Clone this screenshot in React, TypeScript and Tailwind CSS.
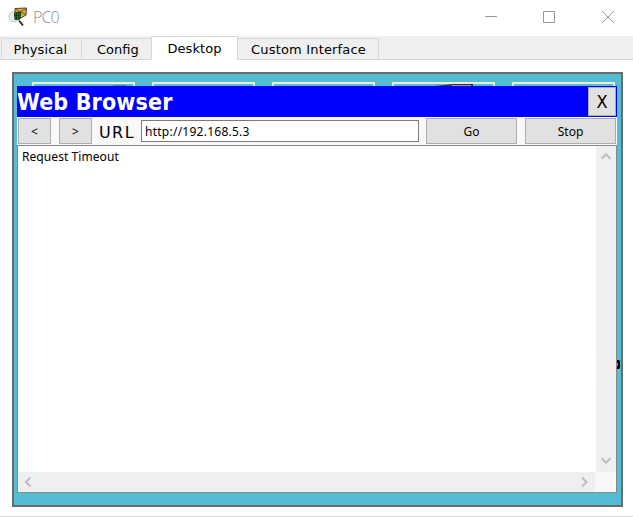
import React from "react";

function Tab({ label, className }: { label: string; className: string }) {
  return (
    <div className={`box-border shrink-0 border border-[#d9d9d9] whitespace-nowrap font-['DejaVu_Sans',sans-serif] text-[13px] leading-[20px] ${className}`}>
      {label}
    </div>
  );
}

function PushButton({ label, className }: { label: string; className: string }) {
  return (
    <button className={`shrink-0 border border-[#adadad] bg-[#e1e1e1] text-center ${className}`}>{label}</button>
  );
}

function Chevron({ d }: { d: string }) {
  return (
    <svg width="12" height="12" viewBox="0 0 12 12" fill="none" stroke="#bfbfbf" strokeWidth="2.1">
      <path d={d} />
    </svg>
  );
}

function AppIcon() {
  return (
    <svg width="20" height="20" viewBox="0 0 20 20">
      <circle cx="6" cy="9.5" r="5.2" fill="#e6eae8" stroke="#c5cbc9" />
      <path d="M7 1.5 18.5 1 18 8 13 11 7 10Z" fill="#dba83f" stroke="#5a4318" />
      <path d="M7.5 2 12 5 18.5 1.5M13 5 18 8" fill="none" stroke="#604615" strokeWidth=".8" />
      <path d="M6.5 6 12.5 5 12 12 7 12.5Z" fill="#0b8a26" stroke="#153419" />
      <path d="M6.5 8.5h6M8.5 5.5v7M10.5 5.5v7" stroke="#063b0c" strokeWidth=".8" />
      <path d="m11 13.5 4 5" stroke="#252525" strokeWidth="1.8" />
    </svg>
  );
}

function TitleBar() {
  return (
    <header className="flex h-[36px] items-start bg-white">
      <div className="ml-[8px] mt-[7px]"><AppIcon /></div>
      <span className="ml-[5px] mt-[7px] flex-1 font-['Open_Sans',sans-serif] text-[16px] leading-[20px] font-light tracking-[-0.9px] text-[#8c8c8c]">PC0</span>
      <svg className="mt-[8px] shrink-0" width="148" height="18" viewBox="485 8 148 18" fill="none" stroke="#999">
        <path d="M485 16.5h12" />
        <path d="M543.5 11.5h11v11h-11z" />
        <path d="m602 11 12 12m0-12-12 12" />
      </svg>
    </header>
  );
}

function Cards() {
  return (
    <div className="flex h-[12px] gap-[17px] pl-[18px] pt-[8px]">
      {[0, 1, 2, 3, 4].map((i) => (
        <div key={i} className="h-[4px] w-[103px] shrink-0 border-2 border-b-0 border-[#efebda]">
          {i === 0 && <div className="ml-[79px] mt-px h-px w-[13px] bg-[#398ba0]" />}
          {i === 3 && (
            <svg className="block" width="99" height="2" viewBox="0 0 99 2">
              <path d="M40 2 60 0h19v2Z" fill="#303638" />
              <path d="M58 1.5h19" stroke="#a09a98" />
            </svg>
          )}
        </div>
      ))}
    </div>
  );
}

export default function App() {
  return (
    <main className="flex h-[517px] w-[633px] flex-col overflow-hidden border-b border-[#d9d9d9] bg-white text-black">
      <TitleBar />
      <nav className="flex h-[24px] items-end border-b border-[#d9d9d9] bg-[#efefef] pl-px">
        <Tab label="Physical" className="-mb-px h-[22px] w-[81px] bg-[#efefef] pl-[11.5px] pt-px tracking-[0.1px]" />
        <Tab label="Config" className="-mb-px -ml-px h-[22px] w-[71px] bg-[#efefef] pl-[15px] pt-px" />
        <Tab label="Desktop" className="-mb-px -ml-px h-[24px] w-[87px] border-b-white bg-white pl-[15.5px] pt-[2px] tracking-[0.05px]" />
        <Tab label="Custom Interface" className="-mb-px -ml-px h-[22px] w-[142px] bg-[#efefef] pl-[13px] pt-px tracking-[0.18px]" />
      </nav>
      <section className="relative ml-[12px] mt-[12px] h-[435px] w-[611px] shrink-0 border-2 border-[#6b6b6b] bg-[#54bdd4]">
        <Cards />
        <svg className="absolute left-[603px] top-[286px]" width="4" height="9" viewBox="0 0 4 9">
          <path d="M0 0h2l1 1v7l-1 1H0Z" fill="#050505" />
          <path d="M0 3h1v3H0Z" fill="#54aa91" />
        </svg>
        <div className="ml-[3px] flex h-[407px] w-[600px] flex-col">
          <div className="flex h-[31px] shrink-0 items-center justify-between bg-[#0000ff] pr-px">
            <h1 className="whitespace-nowrap pt-px font-['DejaVu_Sans_Condensed','DejaVu_Sans',sans-serif] text-[23px] leading-[30px] font-bold tracking-[0.15px] text-white">Web Browser</h1>
            <PushButton label="X" className="h-[29px] w-[28px] font-['DejaVu_Sans_Condensed','DejaVu_Sans',sans-serif] text-[18px] leading-[27px]" />
          </div>
          <div className="flex h-[28px] shrink-0 items-center bg-[#f8f8f8] pl-px font-['Noto_Sans',sans-serif] text-[12px] leading-[24px]">
            <PushButton label="<" className="h-[26px] w-[33px] pt-px" />
            <PushButton label=">" className="ml-[8px] h-[26px] w-[33px] pt-px" />
            <label className="ml-[7px] w-[42px] shrink-0 pt-[3px] font-['DejaVu_Sans',sans-serif] text-[16px] tracking-[1.4px]">URL</label>
            <input aria-label="URL" defaultValue="http://192.168.5.3" className="h-[22px] w-[278px] shrink-0 rounded-none border border-[#7a7a7a] bg-white pl-[3px] pt-px font-['Noto_Sans',sans-serif] text-[12px] tracking-[0.25px] outline-none" />
            <PushButton label="Go" className="ml-[7px] h-[26px] w-[91px] pt-px" />
            <PushButton label="Stop" className="ml-[8px] h-[26px] w-[91px] pt-px" />
          </div>
          <div className="flex h-[348px] shrink-0 flex-col border border-[#828790] bg-white">
            <div className="flex h-[326px]">
              <div className="w-[578px] pl-[4px] pt-px font-['Noto_Sans',sans-serif] text-[12px] leading-[20px] tracking-[0.07px]">Request Timeout</div>
              <div className="flex w-[20px] flex-col items-center justify-between bg-[#efefef] py-[5px] pr-px">
                <Chevron d="m1.5 7.8 4.5-4.5 4.5 4.5" />
                <Chevron d="m1.5 3.2 4.5 4.5 4.5-4.5" />
              </div>
            </div>
            <div className="flex h-[20px]">
              <div className="flex w-[577px] items-center justify-between bg-[#efefef] px-[4px] pb-px">
                <Chevron d="m8.5 1.5-4.5 4.5 4.5 4.5" />
                <Chevron d="m3 1.5 4.5 4.5-4.5 4.5" />
              </div>
              <div className="w-[21px] bg-[#f8f8f8]" />
            </div>
          </div>
        </div>
      </section>
    </main>
  );
}
